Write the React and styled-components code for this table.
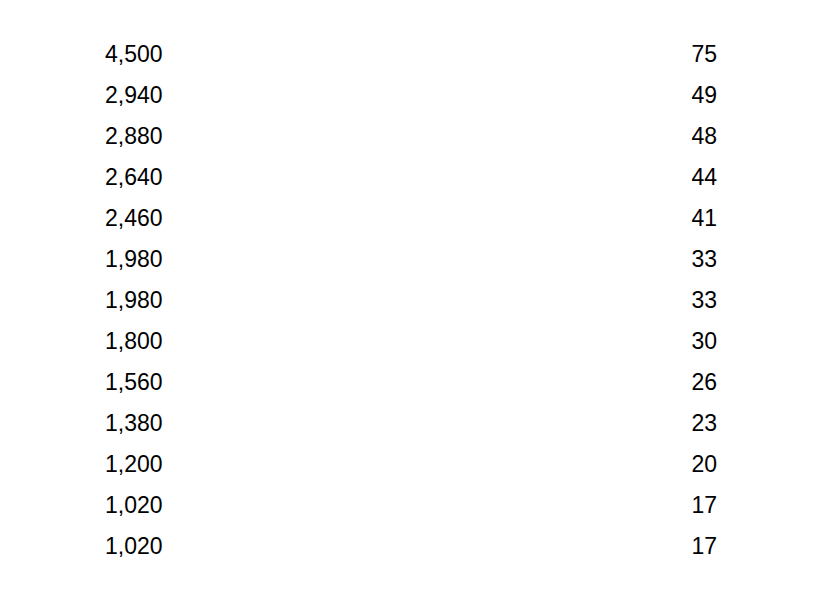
import React from "react";
import styled, { createGlobalStyle } from "styled-components";

const Global = createGlobalStyle`
  html, body { margin: 0; padding: 0; background: #ffffff; }
  body { font-family: "Liberation Sans", Arial, sans-serif; color: #000; }
`;

const Page = styled.div`
  width: 834px;
  height: 605px;
  box-sizing: border-box;
  padding: 34px 0 0 105px;
`;

const Table = styled.div`
  display: grid;
  grid-template-columns: 200px 412px;
  width: 612px;
`;

const Cell = styled.div`
  height: 41px;
  line-height: 41px;
  font-size: 23px;
  text-align: ${(p) => (p.$right ? "right" : "left")};
`;

const rows = [
  ["4,500", "75"],
  ["2,940", "49"],
  ["2,880", "48"],
  ["2,640", "44"],
  ["2,460", "41"],
  ["1,980", "33"],
  ["1,980", "33"],
  ["1,800", "30"],
  ["1,560", "26"],
  ["1,380", "23"],
  ["1,200", "20"],
  ["1,020", "17"],
  ["1,020", "17"],
];

export default function App() {
  return (
    <>
      <Global />
      <Page>
        <Table>
          {rows.map(([a, b], i) => (
            <React.Fragment key={i}>
              <Cell>{a}</Cell>
              <Cell $right>{b}</Cell>
            </React.Fragment>
          ))}
        </Table>
      </Page>
    </>
  );
}
